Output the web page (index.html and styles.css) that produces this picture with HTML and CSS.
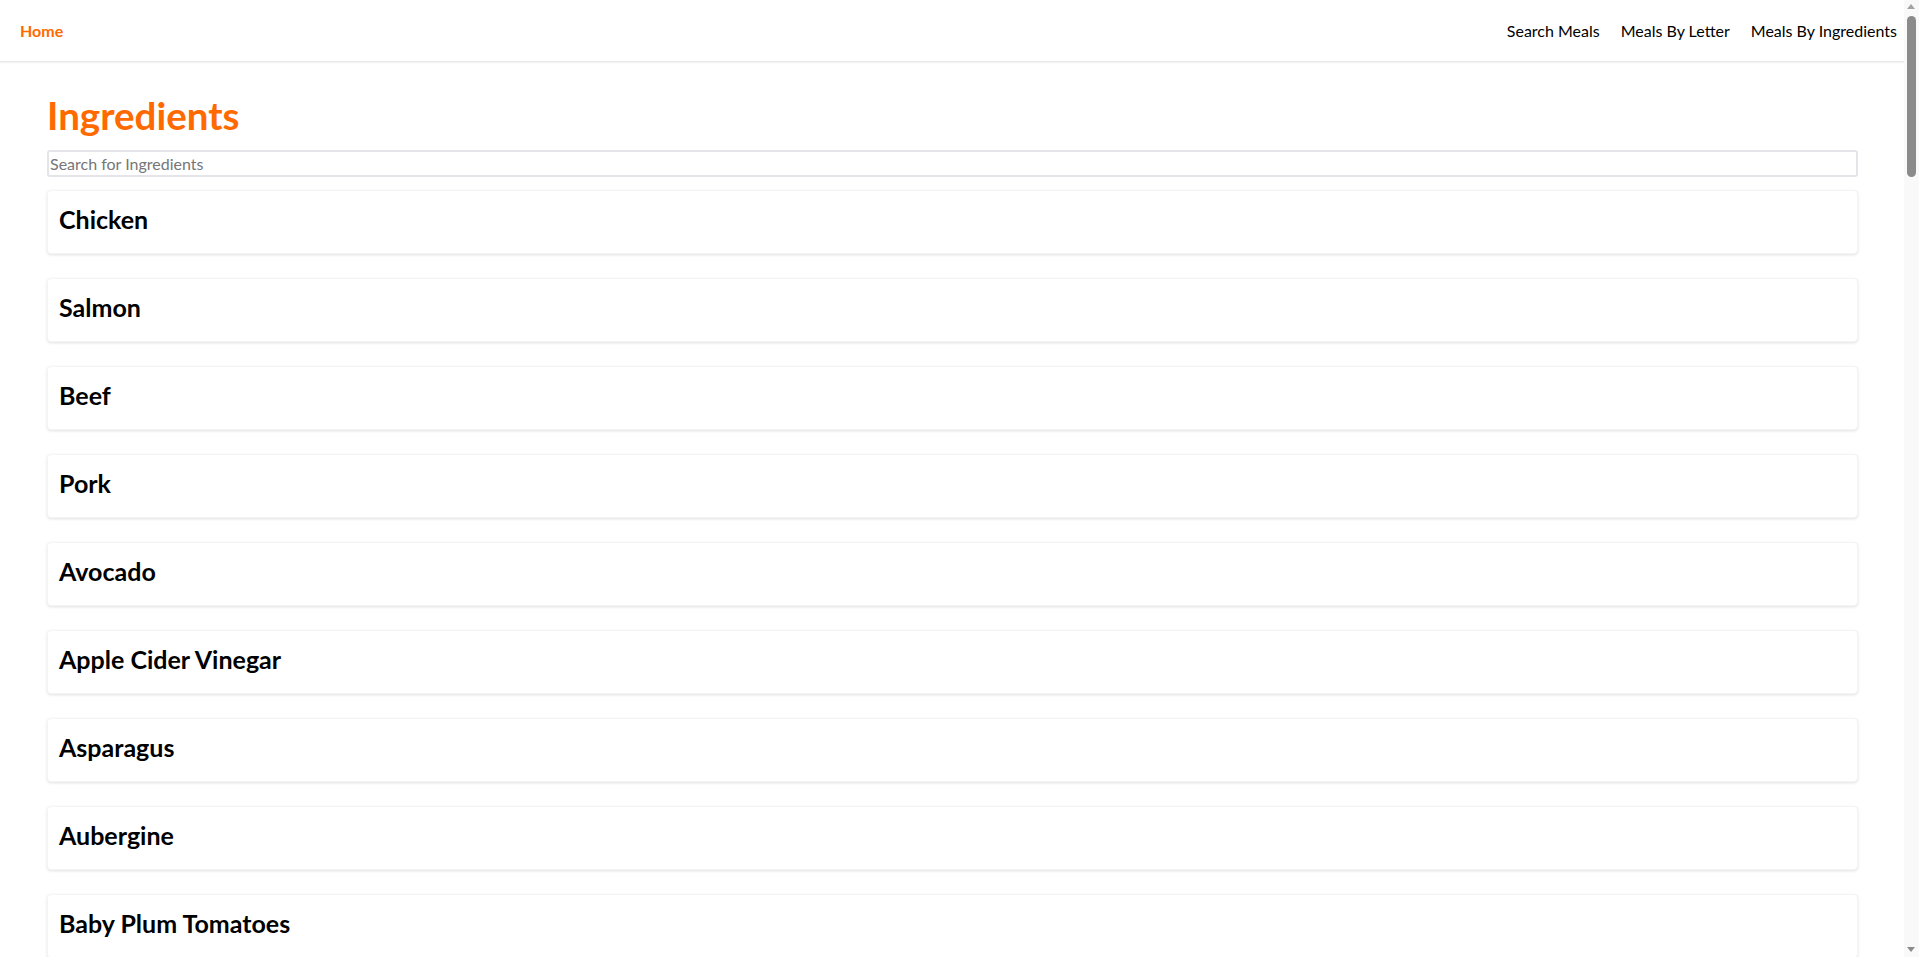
FILE: index.html
```html
<!DOCTYPE html>
<html lang="en">
<head>
<meta charset="utf-8">
<title>Ingredients</title>
<link rel="stylesheet" href="styles.css">
</head>
<body>
<header class="navbar">
  <a class="nav-home" href="#">Home</a>
  <nav class="nav-links">
    <a href="#">Search Meals</a>
    <a href="#">Meals By Letter</a>
    <a href="#">Meals By Ingredients</a>
  </nav>
</header>
<main class="page">
  <h1 class="title">Ingredients</h1>
  <input class="search" type="text" placeholder="Search for Ingredients">
  <div class="list">
    <div class="card"><h2>Chicken</h2></div>
    <div class="card"><h2>Salmon</h2></div>
    <div class="card"><h2>Beef</h2></div>
    <div class="card"><h2>Pork</h2></div>
    <div class="card"><h2>Avocado</h2></div>
    <div class="card"><h2>Apple Cider Vinegar</h2></div>
    <div class="card"><h2>Asparagus</h2></div>
    <div class="card"><h2>Aubergine</h2></div>
    <div class="card"><h2>Baby Plum Tomatoes</h2></div>
  </div>
</main>
<div class="scrollbar" aria-hidden="true">
  <span class="sb-arrow sb-up"></span>
  <span class="sb-thumb"></span>
  <span class="sb-arrow sb-down"></span>
</div>
</body>
</html>
```
FILE: styles.css
```css
html {
  overflow: hidden;
}
body {
  margin: 0 15px 0 0;
  height: 957px;
  overflow: hidden;
  background: #ffffff;
  color: #000000;
  font-family: Lato, "Noto Sans", sans-serif;
}
.navbar {
  height: 62px;
  display: flex;
  align-items: center;
  justify-content: space-between;
  padding: 0 7px 0 20px;
  border-bottom: 1px solid #e7e7e7;
  box-shadow: 0 1px 2px rgba(0, 0, 0, 0.06);
  box-sizing: border-box;
}
.nav-home {
  color: #ff6a00;
  font-weight: 700;
  font-size: 16px;
  text-decoration: none;
}
.nav-links {
  display: flex;
  gap: 21px;
}
.nav-links a {
  color: #000;
  font-size: 16px;
  text-decoration: none;
}
.page {
  padding: 33px 46px 0 47px;
}
.title {
  margin: 0 0 15px 0;
  color: #ff6a00;
  font-size: 38.5px;
  line-height: 40px;
  font-weight: 700;
}
.search {
  display: block;
  width: 100%;
  box-sizing: border-box;
  height: 27px;
  margin: 0;
  border: 2px solid #e4e4e9;
  border-radius: 3px;
  padding: 0 1px;
  font-family: inherit;
  font-size: 16px;
  color: #333;
  outline: none;
  background: #fff;
}
.search::placeholder {
  color: #767676;
}
.list {
  display: flex;
  flex-direction: column;
  gap: 24px;
  margin-top: 13px;
}
.card {
  height: 64px;
  box-sizing: border-box;
  padding: 12px 11px 0 11px;
  border: 1px solid #f5f5f5;
  border-radius: 4px;
  box-shadow: 0 1px 3px rgba(0, 0, 0, 0.12);
  background: #fff;
}
.card h2 {
  margin: 0;
  font-size: 25px;
  line-height: 32px;
  font-weight: 700;
}
.scrollbar {
  position: fixed;
  top: 0;
  right: 0;
  width: 15px;
  height: 100vh;
  background: #f9f9f9;
}
.sb-thumb {
  position: absolute;
  left: 3px;
  top: 16px;
  width: 9px;
  height: 161px;
  border-radius: 5px;
  background: #8b8b8b;
}
.sb-arrow {
  position: absolute;
  left: 3px;
  width: 0;
  height: 0;
  border-left: 4.5px solid transparent;
  border-right: 4.5px solid transparent;
}
.sb-up {
  top: 4px;
  border-bottom: 5px solid #a3a3a3;
}
.sb-down {
  bottom: 5px;
  border-top: 5px solid #8b8b8b;
}
```
